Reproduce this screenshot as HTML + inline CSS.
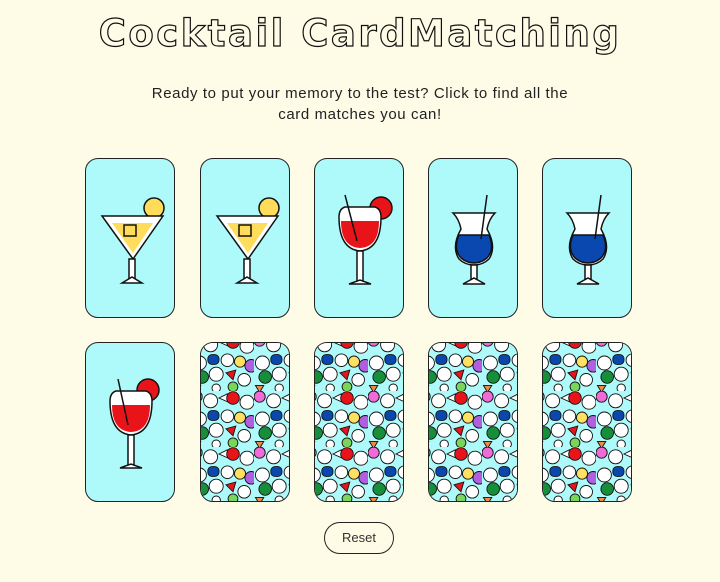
<!DOCTYPE html>
<html><head><meta charset="utf-8"><style>
html,body{margin:0;padding:0;background:#fefce6;width:720px;height:582px;overflow:hidden;font-family:"Liberation Sans",sans-serif}
h1{position:absolute;left:0;width:720px;top:12px;margin:0;text-align:center;font-size:37px;font-weight:bold;letter-spacing:2.5px;color:transparent;-webkit-text-stroke:1.2px #111;font-family:"DejaVu Sans",sans-serif}
p{position:absolute;left:140px;width:440px;top:83px;margin:0;text-align:center;font-size:15px;letter-spacing:0.6px;line-height:21px;color:#222}
.card{position:absolute;width:90px;height:160px;border-radius:13px;border:1px solid #222;box-sizing:border-box;background:#aefafa;overflow:hidden}
.card svg{position:absolute;left:0;top:0}
.btn{position:absolute;left:324px;top:522px;width:70px;height:32px;border:1px solid #222;border-radius:16px;box-sizing:border-box;text-align:center;line-height:30px;font-size:13px;color:#333}
</style></head><body>
<svg width="0" height="0" style="position:absolute">
<defs>
<pattern id="pat" width="63" height="56" patternUnits="userSpaceOnUse" patternTransform="translate(-10,-8)">
<g transform="scale(0.7)">
<rect width="90" height="80" fill="#aefafa"/>
<g stroke="#111" stroke-width="1.3">
<circle cx="8" cy="8" r="8" fill="#f06ad8"/>
<circle cx="28" cy="14" r="10" fill="#fff"/>
<path d="M40 10 l12 -6 l6 14 z" fill="#fff"/>
<circle cx="60" cy="10" r="9" fill="#e8141a"/>
<circle cx="80" cy="16" r="10" fill="#fff"/>
<rect x="24" y="28" width="16" height="14" rx="6" fill="#0a48b0"/>
<circle cx="52" cy="36" r="9" fill="#fff"/>
<circle cx="70" cy="38" r="8" fill="#ffe060"/>
<circle cx="86" cy="44" r="9" fill="#b15ee0"/>
<circle cx="12" cy="40" r="10" fill="#fff"/>
<circle cx="16" cy="60" r="9" fill="#178f3a"/>
<circle cx="36" cy="56" r="10" fill="#fff"/>
<path d="M50 54 l14 -4 l-4 14 z" fill="#e8141a"/>
<circle cx="76" cy="64" r="9" fill="#fff"/>
<circle cx="60" cy="74" r="7" fill="#7ad65a"/>
<path d="M2 72 l12 0 l-6 10 z" fill="#f08a4a"/>
<circle cx="36" cy="76" r="6" fill="#fff"/>
</g></g>
</pattern>
</defs></svg>

<h1>Cocktail CardMatching</h1>
<p>Ready to put your memory to the test? Click to find all the card matches you can!</p>

<div class="card" style="left:85px;top:158px"><svg width="90" height="160"><g stroke="#111" stroke-width="1.5"><circle cx="68" cy="49" r="10" fill="#ffdc5a"/><path d="M16 57 H77 L47 100 Z" fill="#fff"/><path d="M26 64 H67 L47 94 Z" fill="#ffdc5a" stroke="none"/><rect x="38" y="66" width="12" height="11" fill="#ffdc5a"/><rect x="43" y="100" width="6" height="20" fill="#fff"/><path d="M36 124 L46 118 L56 124 Z" fill="#fff"/></g></svg></div>
<div class="card" style="left:200px;top:158px"><svg width="90" height="160"><g stroke="#111" stroke-width="1.5"><circle cx="68" cy="49" r="10" fill="#ffdc5a"/><path d="M16 57 H77 L47 100 Z" fill="#fff"/><path d="M26 64 H67 L47 94 Z" fill="#ffdc5a" stroke="none"/><rect x="38" y="66" width="12" height="11" fill="#ffdc5a"/><rect x="43" y="100" width="6" height="20" fill="#fff"/><path d="M36 124 L46 118 L56 124 Z" fill="#fff"/></g></svg></div>
<div class="card" style="left:314px;top:158px"><svg width="90" height="160"><g stroke="#111" stroke-width="1.5"><circle cx="66" cy="49" r="11" fill="#e8141a"/><path d="M24 58 Q24 50 30 48 H60 Q66 50 66 58 Q66 90 45 92 Q24 90 24 58 Z" fill="#fff"/><path d="M26 62 H64 Q64 88 45 89 Q26 88 26 62 Z" fill="#e8141a" stroke="none"/><line x1="30" y1="36" x2="42" y2="82"/><rect x="42" y="92" width="6" height="30" fill="#fff"/><path d="M34 125 L45 121 L56 125 Z" fill="#fff"/></g></svg></div>
<div class="card" style="left:428px;top:158px"><svg width="90" height="160"><g stroke="#111" stroke-width="1.5"><path d="M24 54 Q30 60 32 70 Q22 88 30 100 Q36 106 45 106 Q54 106 60 100 Q68 88 58 70 Q60 60 66 54 Z" fill="#fff"/><path d="M30 76 H60 Q66 90 58 99 Q52 104 45 104 Q38 104 32 99 Q24 90 30 76 Z" fill="#0a48b0"/><line x1="58" y1="36" x2="52" y2="80"/><rect x="42" y="106" width="6" height="14" fill="#fff"/><path d="M34 125 L45 119 L56 125 Z" fill="#fff"/></g></svg></div>
<div class="card" style="left:542px;top:158px"><svg width="90" height="160"><g stroke="#111" stroke-width="1.5"><path d="M24 54 Q30 60 32 70 Q22 88 30 100 Q36 106 45 106 Q54 106 60 100 Q68 88 58 70 Q60 60 66 54 Z" fill="#fff"/><path d="M30 76 H60 Q66 90 58 99 Q52 104 45 104 Q38 104 32 99 Q24 90 30 76 Z" fill="#0a48b0"/><line x1="58" y1="36" x2="52" y2="80"/><rect x="42" y="106" width="6" height="14" fill="#fff"/><path d="M34 125 L45 119 L56 125 Z" fill="#fff"/></g></svg></div>

<div class="card" style="left:85px;top:342px"><svg width="90" height="160"><g stroke="#111" stroke-width="1.5"><circle cx="62" cy="47" r="11" fill="#e8141a"/><path d="M24 58 Q24 50 30 48 H60 Q66 50 66 58 Q66 90 45 92 Q24 90 24 58 Z" fill="#fff"/><path d="M26 62 H64 Q64 88 45 89 Q26 88 26 62 Z" fill="#e8141a" stroke="none"/><line x1="32" y1="36" x2="42" y2="82"/><rect x="42" y="92" width="6" height="30" fill="#fff"/><path d="M34 125 L45 121 L56 125 Z" fill="#fff"/></g></svg></div>
<div class="card" style="left:200px;top:342px"><svg width="90" height="160"><rect width="90" height="160" fill="url(#pat)"/></svg></div>
<div class="card" style="left:314px;top:342px"><svg width="90" height="160"><rect width="90" height="160" fill="url(#pat)"/></svg></div>
<div class="card" style="left:428px;top:342px"><svg width="90" height="160"><rect width="90" height="160" fill="url(#pat)"/></svg></div>
<div class="card" style="left:542px;top:342px"><svg width="90" height="160"><rect width="90" height="160" fill="url(#pat)"/></svg></div>

<div class="btn">Reset</div>
</body></html>
